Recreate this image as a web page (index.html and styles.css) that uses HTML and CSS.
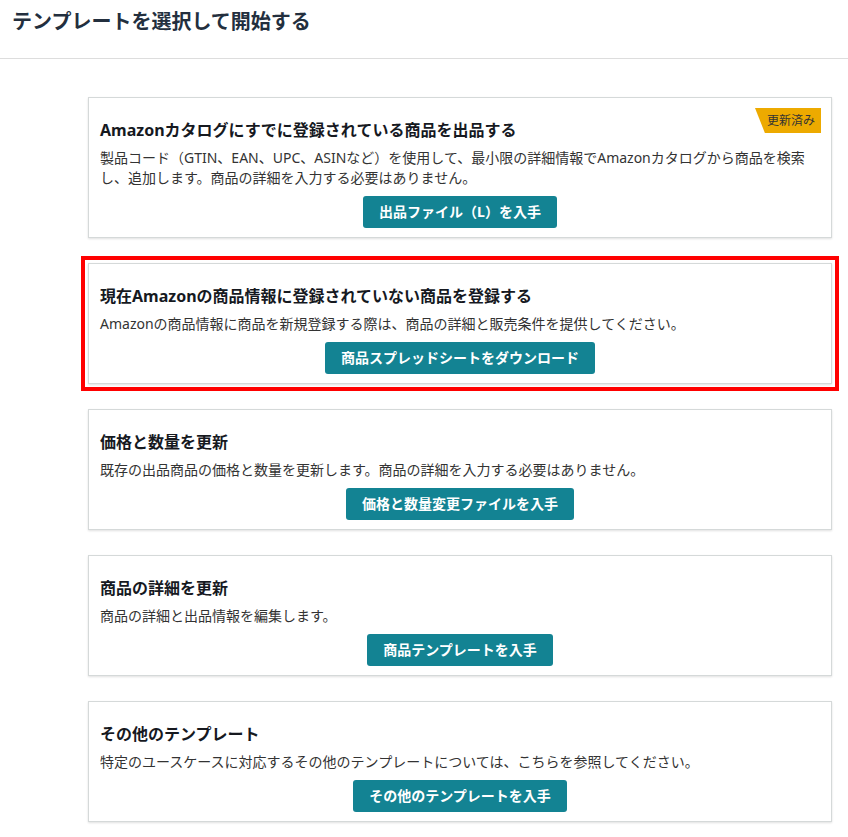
FILE: index.html
```html
<!DOCTYPE html>
<html lang="ja">
<head>
    <meta charset="UTF-8">
    <meta name="viewport" content="width=device-width, initial-scale=1.0">
    <title>テンプレートを選択して開始する</title>
    <link rel="stylesheet" href="styles.css">
</head>
<body>
    <div class="page-header">
        <h1>テンプレートを選択して開始する</h1>
    </div>

    <div class="template-list">
        <div class="template-card">
            <span class="badge">更新済み</span>
            <h3>Amazonカタログにすでに登録されている商品を出品する</h3>
            <p>製品コード（GTIN、EAN、UPC、ASINなど）を使用して、最小限の詳細情報でAmazonカタログから商品を検索し、追加します。商品の詳細を入力する必要はありません。</p>
            <div class="actions">
                <button>出品ファイル（L）を入手</button>
            </div>
        </div>

        <div class="template-card highlighted">
            <h3>現在Amazonの商品情報に登録されていない商品を登録する</h3>
            <p>Amazonの商品情報に商品を新規登録する際は、商品の詳細と販売条件を提供してください。</p>
            <div class="actions">
                <button>商品スプレッドシートをダウンロード</button>
            </div>
        </div>

        <div class="template-card">
            <h3>価格と数量を更新</h3>
            <p>既存の出品商品の価格と数量を更新します。商品の詳細を入力する必要はありません。</p>
            <div class="actions">
                <button>価格と数量変更ファイルを入手</button>
            </div>
        </div>

        <div class="template-card">
            <h3>商品の詳細を更新</h3>
            <p>商品の詳細と出品情報を編集します。</p>
            <div class="actions">
                <button>商品テンプレートを入手</button>
            </div>
        </div>

        <div class="template-card">
            <h3>その他のテンプレート</h3>
            <p>特定のユースケースに対応するその他のテンプレートについては、こちらを参照してください。</p>
            <div class="actions">
                <button>その他のテンプレートを入手</button>
            </div>
        </div>
    </div>
</body>
</html>
```

FILE: styles.css
```css
body {
    font-family: "Noto Sans", "Noto Sans CJK JP", sans-serif;
    background-color: #fff;
    color: #333;
    margin: 0;
    padding: 0;
}

.page-header {
    padding: 8px 12px 22px;
    border-bottom: 1px solid #ddd;
}

.page-header h1 {
    margin: 0;
    font-size: 20px;
    line-height: 28px;
    font-weight: bold;
    color: #232f3e;
}

.template-list {
    display: flex;
    flex-direction: column;
    gap: 25px;
    padding: 38px 16px 20px 88px;
}

.template-card {
    position: relative;
    background: #fff;
    border: 1px solid #d5d9d9;
    box-shadow: 0 1px 2px rgba(0, 0, 0, 0.12);
    padding: 20px 20px 9px 11px;
}

.template-card.highlighted {
    outline: 4px solid #f00;
    outline-offset: 3px;
}

.template-card h3 {
    margin: 0 0 6px 0;
    font-size: 16px;
    line-height: 24px;
    font-weight: bold;
    color: #16191f;
}

.template-card p {
    margin: 0;
    font-size: 14px;
    line-height: 20px;
    color: #333;
}

.actions {
    display: flex;
    justify-content: center;
    margin-top: 8px;
    padding-left: 9px;
}

button {
    font-family: inherit;
    font-size: 14px;
    font-weight: bold;
    line-height: 20px;
    padding: 6px 16px;
    color: #fff;
    background-color: #138393;
    border: none;
    border-radius: 3px;
    cursor: pointer;
}

button:hover {
    background-color: #0f6f7c;
}

.badge {
    position: absolute;
    top: 10px;
    right: 10px;
    width: 66px;
    height: 25px;
    box-sizing: border-box;
    padding-left: 12px;
    font-size: 12px;
    line-height: 25px;
    color: #333;
    background-color: #edaa00;
    clip-path: polygon(0 0, 100% 0, 100% 100%, 15% 100%);
}
```
